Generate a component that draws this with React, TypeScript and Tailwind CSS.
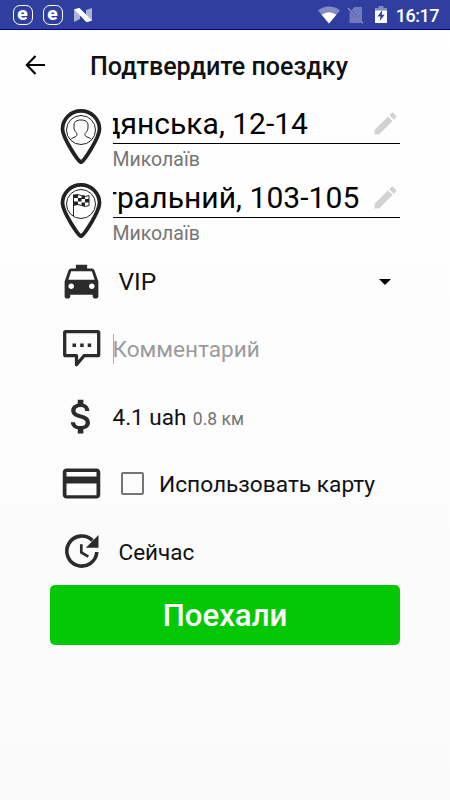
import type { ReactNode } from 'react';

const ICONS = {
    taxi: 'M18.92 6.01C18.72 5.42 18.16 5 17.5 5H15V3H9v2H6.5c-.66 0-1.21.42-1.42 1.01L3 12v8c0 .55.45 1 1 1h1c.55 0 1-.45 1-1v-1h12v1c0 .55.45 1 1 1h1c.55 0 1-.45 1-1v-8l-2.08-5.99zM6.5 16c-.83 0-1.5-.67-1.5-1.5S5.67 13 6.5 13s1.5.67 1.5 1.5S7.33 16 6.5 16zm11 0c-.83 0-1.5-.67-1.5-1.5s.67-1.5 1.5-1.5 1.5.67 1.5 1.5-.67 1.5-1.5 1.5zM5 11l1.5-4.5h11L19 11H5z',
    money: 'M11.8 10.9c-2.27-.59-3-1.2-3-2.15 0-1.09 1.01-1.85 2.7-1.85 1.78 0 2.44.85 2.5 2.1h2.21c-.07-1.72-1.12-3.3-3.21-3.81V3h-3v2.16c-1.94.42-3.5 1.68-3.5 3.61 0 2.31 1.91 3.46 4.7 4.13 2.5.6 3 1.48 3 2.41 0 .69-.49 1.79-2.7 1.79-2.06 0-2.87-.92-2.98-2.1h-2.2c.12 2.19 1.76 3.42 3.68 3.83V21h3v-2.15c1.95-.37 3.5-1.5 3.5-3.55 0-2.84-2.43-3.81-4.7-4.4z',
    card: 'M20 4H4c-1.11 0-1.99.89-1.99 2L2 18c0 1.11.89 2 2 2h16c1.11 0 2-.89 2-2V6c0-1.11-.89-2-2-2zm0 14.200H4v-6.200h16v6.200zm0-10H4V5.900h16v2.300z',
    edit: 'M3 17.25V21h3.75L17.81 9.94l-3.75-3.75L3 17.25zM20.71 7.04c.39-.39.39-1.02 0-1.41l-2.34-2.34c-.39-.39-1.02-.39-1.41 0l-1.83 1.83 3.75 3.75 1.83-1.83z'
};

const Glyph = ({ d, className }: { d: string; className: string }) => (
    <svg viewBox="0 0 24 24" fill="currentColor" className={className}>
        <path d={d} />
    </svg>
);

const CommentIcon = () => (
    <svg viewBox="0 0 45 45" className="size-[45px] shrink-0">
        <path
            d="M6.700 5.700h32a1 1 0 0 1 1 1v22a1 1 0 0 1-1 1H25l-7.500 9v-9H6.700a1 1 0 0 1-1-1v-22a1 1 0 0 1 1-1z"
            fill="none"
            stroke="currentColor"
            strokeWidth="3.300"
            strokeLinejoin="round"
        />
        <path d="M13.500 17.500h3.500V21h-3.500zM21.200 17.500h3.500V21h-3.500zM28.700 17.500h3.500V21h-3.500z" fill="currentColor" />
    </svg>
);

const UpdateIcon = () => (
    <svg viewBox="0 0 45 45" className="size-[45px] shrink-0" fill="none" stroke="currentColor">
        <path d="M33.500 11.500a15 15 0 1 0 4.300 11.500" strokeWidth="3.600" />
        <path d="M22.300 15.200v8.200l7 4.200" strokeWidth="2.700" />
        <path d="M39.500 6v12.700H26.800z" fill="currentColor" stroke="none" />
    </svg>
);

const Pin = ({ children }: { children: ReactNode }) => (
    <svg viewBox="0 0 46 60" className="h-[60px] w-[46px] shrink-0 text-[#222]" fill="none" stroke="currentColor">
        <path d="M23 56.200C20.500 56.200 4.800 32 4.500 23.300a18.500 18.500 0 1 1 37 0C41.200 32 25.500 56.200 23 56.200z" strokeWidth="3.800" />
        <circle cx="23" cy="24" r="14.500" strokeWidth="1" />
        {children}
    </svg>
);

const EBadge = () => (
    <div className="mt-px flex h-5 w-5 items-center justify-center rounded-[7px] border-[1.500px] border-white text-[19px] leading-none font-black">
        <span className="-mt-[3px]">e</span>
    </div>
);

const StatusBar = () => (
    <div className="flex h-[30px] items-center border-b border-[#000080] bg-[#303f9f] pr-[11px] pl-[12.500px] text-white">
        <div className="flex items-center gap-[10px]">
            <EBadge />
            <EBadge />
            <svg viewBox="0 0 20 16" className="h-4 w-5" fill="white">
                <path d="M1 2.500 7 1v11l-6 3zM13 3l6-2v12.500L13 15z" opacity=".6" />
                <path d="M1 2.200 6.500 1 19 13.500l-5.500 1.700z" />
            </svg>
        </div>
        <svg viewBox="0 0 22 18" className="ml-auto h-[18px] w-[22px]" fill="white">
            <path d="M0 4.500a17 17 0 0 1 22 0L11 17.500z" opacity=".4" />
            <path d="M3.700 8.800a11.500 11.500 0 0 1 14.600 0L11 17.500z" />
        </svg>
        <svg viewBox="0 0 18 18" className="ml-[7px] h-[18px] w-[18px]">
            <path d="M4.500 4 7.500 1H15v14zM2.500 5.500 14.500 17H2.500z" fill="#8c95cb" opacity=".7" />
            <path d="M1 2.200 16 17.200" stroke="#8c95cb" strokeWidth="1.300" />
        </svg>
        <svg viewBox="0 0 14 19" className="ml-[9px] h-[19px] w-[14px]">
            <path d="M4.500 1h5v2H13v4H1V3h3.500z" fill="white" opacity=".4" />
            <path d="M1 5.500h12V18H1z" fill="white" />
            <path d="M8.300 5 3.500 11.500h3L5.700 16l5-6.300h-3z" fill="#303f9f" />
        </svg>
        <span className="mt-[2px] ml-[8px] text-[18px] leading-none font-medium tracking-[-0.5px]">16:17</span>
    </div>
);

type AddressProps = {
    pin: ReactNode;
    city: string;
    children: ReactNode;
};

const AddressRow = ({ pin, city, children }: AddressProps) => (
    <div className="flex h-[74px] pr-[50px] pl-[58px]">
        <Pin>{pin}</Pin>
        <div className="ml-[8.500px] min-w-0 flex-1">
            <div className="flex h-[38px] items-start justify-between overflow-hidden border-b border-black">
                <div className="overflow-hidden text-[30px] leading-[36px] whitespace-nowrap text-black">{children}</div>
                <Glyph d={ICONS.edit} className="mt-[3px] size-[29px] shrink-0 text-[#d2d2d2]" />
            </div>
            <div className="pt-[3px] text-[19.500px] leading-[25px] text-[#757575]">{city}</div>
        </div>
    </div>
);

const Row = ({ icon, children }: { icon: ReactNode; children: ReactNode }) => (
    <div className="flex h-[67.500px] items-center pr-[50px] pl-[58.500px] text-[#2b2b2b]">
        {icon}
        <div className="ml-[9px] flex flex-1 items-center text-[22.500px] text-[#111]">{children}</div>
    </div>
);

export default function App() {
    return (
        <div className="h-[800px] w-[450px] overflow-hidden bg-linear-to-b from-white to-[#fafafa] font-[Roboto,sans-serif]">
            <StatusBar />

            {/* Toolbar */}
            <header className="flex h-[76px] items-center pl-[25px]">
                <svg viewBox="0 0 21 20" className="-mt-[6px] h-5 w-[21px] text-black" fill="none" stroke="currentColor" strokeWidth="2.100">
                    <path d="M10.500 1 1.800 10l8.700 9M2 10h18" />
                </svg>
                <h1 className="-mt-[2px] ml-[44px] text-[25.100px] font-medium text-[#111]">Подтвердите поездку</h1>
            </header>

            {/* Route */}
            <div className="h-[141.500px]">
                <AddressRow
                    city="Миколаїв"
                    pin={<path d="M12.500 33.500c3-3 7-2 6.500-6-3.500-3-3-6-3-8.500 0-3.500 3-5 7-5s7 1.500 7 5c0 2.500.5 5.500-3 8.500-.5 4 3.500 3 6.500 6" strokeWidth="1" />}
                >
                    <span className="-ml-[10px]">дянська, 12-14</span>
                </AddressRow>
                <AddressRow
                    city="Миколаїв"
                    pin={
                        <>
                            <path d="M15.500 14.500V36M15.500 15.500q4-2 8 0t7.500 0v10q-4 2-7.500 0t-8 0" strokeWidth="1" />
                            <path d="M16 14.500h4V18h-4zM23.500 15.500h3.500V19h-3.500zM20 18h3.500v3.500H20zM27 19h4v3.500h-4zM16 21.500h4V25h-4zM23.500 22.500h3.500V26h-3.500z" fill="currentColor" stroke="none" />
                        </>
                    }
                >
                    <span className="-ml-[10px] tracking-[0.05px]">тральний, 103-105</span>
                </AddressRow>
            </div>

            {/* Order options */}
            <Row icon={<Glyph d={ICONS.taxi} className="size-[45px] shrink-0" />}>
                <span className="mt-[3px] ml-[6px] text-[24.500px]">VIP</span>
                <svg viewBox="0 0 12 6" className="mt-px mr-[9px] ml-auto h-[6px] w-3 text-black" fill="currentColor">
                    <path d="M0 0h12L6 6z" />
                </svg>
            </Row>
            <Row icon={<CommentIcon />}>
                <div className="h-[30px] w-px bg-[#aaa]" />
                <span className="mt-[3px] -ml-px text-[22.600px] text-[#9b9b9b]">Комментарий</span>
            </Row>
            <Row icon={<Glyph d={ICONS.money} className="size-[45px] shrink-0" />}>
                <div className="mt-[3px] flex items-baseline">
                    <span>4.1 uah</span>
                    <span className="ml-[6.500px] text-[17.500px] text-[#757575]">0.8 км</span>
                </div>
            </Row>
            <Row icon={<Glyph d={ICONS.card} className="size-[45px] shrink-0" />}>
                <div className="ml-[8.500px] size-[23px] shrink-0 rounded-[2px] border-2 border-[#757575]" />
                <span className="mt-[3px] ml-[15px] text-[22.700px] whitespace-nowrap">Использовать карту</span>
            </Row>
            <Row icon={<UpdateIcon />}>
                <span className="mt-[3px] ml-[6px]">Сейчас</span>
            </Row>

            <button className="mx-[50px] flex h-[60px] w-[350px] items-center justify-center rounded-[5px] bg-[#05c805] pt-[3px] text-[31.200px] font-medium text-white">
                Поехали
            </button>
        </div>
    );
}
